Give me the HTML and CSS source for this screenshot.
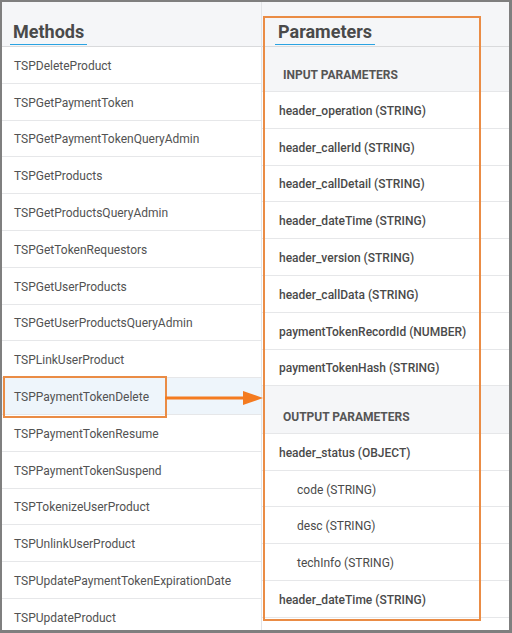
FILE: index.html
```html
<!DOCTYPE html>
<html>
<head>
<meta charset="utf-8">
<link rel="stylesheet" href="styles.css">
</head>
<body>
<div class="frame">
  <div class="col methods">
    <div class="head"><span class="title">Methods</span></div>
    <div class="row">TSPDeleteProduct</div>
    <div class="row">TSPGetPaymentToken</div>
    <div class="row">TSPGetPaymentTokenQueryAdmin</div>
    <div class="row">TSPGetProducts</div>
    <div class="row">TSPGetProductsQueryAdmin</div>
    <div class="row">TSPGetTokenRequestors</div>
    <div class="row">TSPGetUserProducts</div>
    <div class="row">TSPGetUserProductsQueryAdmin</div>
    <div class="row">TSPLinkUserProduct</div>
    <div class="row selected">TSPPaymentTokenDelete</div>
    <div class="row">TSPPaymentTokenResume</div>
    <div class="row">TSPPaymentTokenSuspend</div>
    <div class="row">TSPTokenizeUserProduct</div>
    <div class="row">TSPUnlinkUserProduct</div>
    <div class="row">TSPUpdatePaymentTokenExpirationDate</div>
    <div class="row">TSPUpdateProduct</div>
  </div>
  <div class="col params">
    <div class="head head-params"><span class="title">Parameters</span></div>
    <div class="section">INPUT PARAMETERS</div>
    <div class="row prow">header_operation (STRING)</div>
    <div class="row prow">header_callerId (STRING)</div>
    <div class="row prow">header_callDetail (STRING)</div>
    <div class="row prow">header_dateTime (STRING)</div>
    <div class="row prow">header_version (STRING)</div>
    <div class="row prow">header_callData (STRING)</div>
    <div class="row prow">paymentTokenRecordId (NUMBER)</div>
    <div class="row prow">paymentTokenHash (STRING)</div>
    <div class="section section-out">OUTPUT PARAMETERS</div>
    <div class="row prow">header_status (OBJECT)</div>
    <div class="row prow child">code (STRING)</div>
    <div class="row prow child">desc (STRING)</div>
    <div class="row prow child">techInfo (STRING)</div>
    <div class="row prow">header_dateTime (STRING)</div>
  </div>
  <div class="mark-box"></div>
  <div class="mark-params"></div>
  <svg class="arrow" width="100" height="20" viewBox="0 0 100 20">
    <line x1="0" y1="10" x2="80" y2="10" stroke="#f47b20" stroke-width="3"/>
    <polygon points="78,3 98,10 78,17" fill="#f47b20"/>
  </svg>
</div>
</body>
</html>
```

FILE: styles.css
```css
* { box-sizing: border-box; }
html, body { margin: 0; padding: 0; }
body {
  font-family: Roboto, "Liberation Sans", sans-serif;
  font-size: 12px;
  color: #525252;
  background: #fff;
}
.frame {
  position: relative;
  width: 512px;
  height: 633px;
  border-style: solid;
  border-color: #7f7f7f;
  border-width: 2px 3px 3px 2px;
  display: flex;
  overflow: hidden;
}
.col { display: flex; flex-direction: column; }
.methods {
  width: 260px;
  border-right: 1px solid #e2e4e7;
}
.params { flex: 1; }
.head {
  height: 45px;
  flex: none;
  background: #f5f6f8;
  border-bottom: 1px solid #d9dadc;
  padding-left: 8px;
  display: flex;
  align-items: flex-end;
}
.head-params { padding-left: 13px; }
.title {
  font-size: 18px;
  font-weight: 700;
  color: #4a4a4a;
  padding: 0 3px 2px 3px;
  border-bottom: 1px solid #2aa3e2;
  margin-bottom: 1px;
  line-height: 20px;
}
.row {
  flex: none;
  height: 36.8px;
  border-bottom: 1px solid #e6e7e9;
  padding-left: 12px;
  padding-top: 2px;
  display: flex;
  align-items: center;
}
.selected { background: #eef5fb; }
.prow {
  padding-left: 17px;
  font-weight: 500;
  color: #4a4a4a;
}
.child { padding-left: 35px; font-weight: 400; }
.section {
  flex: none;
  height: 45px;
  background: #f5f6f8;
  border-bottom: 1px solid #e6e7e9;
  padding-left: 21px;
  padding-bottom: 8px;
  display: flex;
  align-items: flex-end;
  font-weight: 700;
  color: #555;
  line-height: 16px;
}
.section-out { height: 47.5px; }
.mark-box {
  position: absolute;
  left: 1px;
  top: 374px;
  width: 164px;
  height: 42px;
  border: 2px solid #ea8c45;
}
.mark-params {
  position: absolute;
  left: 261px;
  top: 14px;
  width: 218px;
  height: 605px;
  border: 2px solid #ea8c45;
}
.arrow {
  position: absolute;
  left: 163px;
  top: 386px;
}
```
